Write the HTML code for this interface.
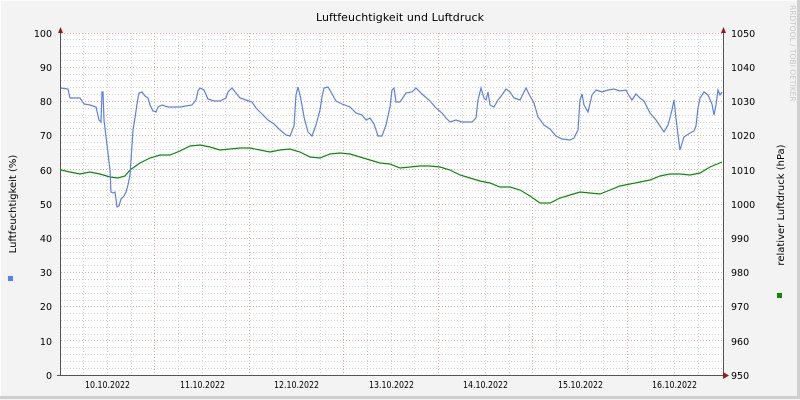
<!DOCTYPE html><html><head><meta charset="utf-8"><style>
html,body{margin:0;padding:0;background:#f3f3f3}
svg{display:block;font-family:"DejaVu Sans","Liberation Sans",sans-serif}
</style></head><body>
<svg width="800" height="400" viewBox="0 0 800 400" xmlns="http://www.w3.org/2000/svg">
<rect x="0" y="0" width="800" height="400" fill="#f3f3f3"/>
<path d="M0.5 399.5V0.5H799.5" stroke="#fcfcfc" fill="none"/>
<path d="M0 397.5H798.5V0" stroke="#cfcfcf" stroke-width="3" fill="none"/>
<rect x="61" y="33" width="662" height="342" fill="#fff"/>
<g shape-rendering="crispEdges">
<g stroke="#d4d4d4" stroke-dasharray="1,2" stroke-width="1">
<path d="M61 368.5H723M61 361.5H723M61 354.5H723M61 347.5H723M61 334.5H723M61 327.5H723M61 320.5H723M61 313.5H723M61 300.5H723M61 293.5H723M61 286.5H723M61 279.5H723M61 265.5H723M61 258.5H723M61 252.5H723M61 245.5H723M61 231.5H723M61 224.5H723M61 217.5H723M61 210.5H723M61 197.5H723M61 190.5H723M61 183.5H723M61 176.5H723M61 163.5H723M61 156.5H723M61 149.5H723M61 142.5H723M61 128.5H723M61 122.5H723M61 115.5H723M61 108.5H723M61 94.5H723M61 87.5H723M61 80.5H723M61 74.5H723M61 60.5H723M61 53.5H723M61 46.5H723M61 39.5H723"/>
<path d="M83.5 33V375M107.5 33V375M131.5 33V375M178.5 33V375M202.5 33V375M225.5 33V375M272.5 33V375M296.5 33V375M320.5 33V375M367.5 33V375M391.5 33V375M414.5 33V375M462.5 33V375M485.5 33V375M509.5 33V375M556.5 33V375M580.5 33V375M603.5 33V375M651.5 33V375M674.5 33V375M698.5 33V375"/>
</g>
<g stroke="#e6a7a7" stroke-dasharray="1,2" stroke-width="1">
<path d="M61 340.5H723M61 306.5H723M61 272.5H723M61 238.5H723M61 204.5H723M61 169.5H723M61 135.5H723M61 101.5H723M61 67.5H723M61 33.5H723"/>
<path d="M154.5 33V375M249.5 33V375M343.5 33V375M438.5 33V375M532.5 33V375M627.5 33V375"/>
</g>
</g>
<polyline fill="none" stroke="#0a8a0a" stroke-width="1.2" points="61,170 70,172 80,174 90,172 100,174 110,177 118,178 125,176 130,170 140,163 150,158 160,155 170,155 180,151 190,146 200,145 210,147 220,150 230,149 240,148 250,148 260,150 270,152 280,150 290,149 300,152 310,157 320,158 330,154 340,153 350,154 360,157 370,160 380,163 390,164 400,168 410,167 420,166 430,166 440,167 450,170 460,175 470,178 480,181 490,183 500,187 510,187 520,190 530,196 540,203 550,203 560,198 570,195 580,192 590,193 600,194 610,190 620,186 630,184 640,182 650,180 660,176 670,174 680,174 690,175 700,173 710,167 722,162"/>
<polyline fill="none" stroke="#5a7ff0" stroke-width="1.2" points="61,88 68,89 70,98 80,98 84,104 90,105 96,107 99,120 101,122 102,92 103,92 104,120 107,145 110,170 111,192 113,193 115,192 117,207 119,206 121,199 124,196 126,192 128,185 130,175 132,145 133,130 135,118 137,104 139,93 142,92 145,96 148,98 150,105 153,111 156,112 158,107 162,105 168,107 174,107 180,107 186,106 192,105 196,100 198,91 200,88 204,90 208,99 214,101 220,101 226,98 228,92 232,88 236,93 240,98 246,100 252,102 256,108 262,114 268,120 274,124 280,130 286,135 290,136 292,131 294,126 296,95 298,87 300,95 302,105 304,117 308,132 312,136 316,125 320,110 322,97 324,88 328,87 332,94 336,101 342,104 350,107 356,113 362,115 366,120 370,118 374,124 378,136 382,136 386,125 390,107 392,90 394,88 396,102 400,102 406,93 412,92 416,88 422,94 430,101 436,108 442,113 446,118 450,122 456,120 462,122 468,122 472,122 476,118 478,100 481,88 484,98 486,100 488,92 490,105 494,107 498,100 502,95 506,89 510,92 514,98 520,100 524,92 526,88 530,96 534,103 538,117 544,125 550,129 556,136 562,139 570,140 574,138 578,130 580,100 582,94 584,105 588,112 592,95 596,90 602,92 608,90 614,89 620,91 626,90 628,94 632,100 636,94 640,98 644,101 650,113 656,120 660,126 664,132 668,125 672,110 674,100 676,118 678,135 680,150 684,137 690,133 694,131 696,126 698,108 700,98 704,92 708,95 712,104 714,115 716,105 718,90 720,95 722,92"/>
<path d="M60.5 30V376M723.5 30V376M57 375.5H726" stroke="#555" stroke-width="1" fill="none" shape-rendering="crispEdges"/>
<polygon points="58,33 63,33 60.5,27" fill="#9a1a1a"/>
<polygon points="721,33 726,33 723.5,27" fill="#9a1a1a"/>
<polygon points="723,372 723,379 729,375.5" fill="#9a1a1a"/>
<g font-size="9.5" fill="#000" text-anchor="end">
<text x="52" y="379">0</text><text x="52" y="345">10</text><text x="52" y="310">20</text><text x="52" y="276">30</text><text x="52" y="242">40</text><text x="52" y="208">50</text><text x="52" y="174">60</text><text x="52" y="139">70</text><text x="52" y="105">80</text><text x="52" y="71">90</text><text x="52" y="37">100</text>
</g>
<g font-size="9.5" fill="#000">
<text x="731" y="379">950</text><text x="731" y="345">960</text><text x="731" y="310">970</text><text x="731" y="276">980</text><text x="731" y="242">990</text><text x="731" y="208">1000</text><text x="731" y="174">1010</text><text x="731" y="139">1020</text><text x="731" y="105">1030</text><text x="731" y="71">1040</text><text x="731" y="37">1050</text>
</g>
<g font-size="10" fill="#000">
<text x="85" y="388" textLength="45" lengthAdjust="spacingAndGlyphs">10.10.2022</text><text x="180" y="388" textLength="45" lengthAdjust="spacingAndGlyphs">11.10.2022</text><text x="274" y="388" textLength="45" lengthAdjust="spacingAndGlyphs">12.10.2022</text><text x="369" y="388" textLength="45" lengthAdjust="spacingAndGlyphs">13.10.2022</text><text x="463" y="388" textLength="45" lengthAdjust="spacingAndGlyphs">14.10.2022</text><text x="558" y="388" textLength="45" lengthAdjust="spacingAndGlyphs">15.10.2022</text><text x="652" y="388" textLength="45" lengthAdjust="spacingAndGlyphs">16.10.2022</text>
</g>
<text x="316" y="21" font-size="11" textLength="168" fill="#000">Luftfeuchtigkeit und Luftdruck</text>
<text transform="translate(16,204) rotate(-90)" font-size="10" text-anchor="middle" fill="#000">Luftfeuchtigkeit (%)</text>
<text transform="translate(784,205) rotate(-90)" font-size="10" text-anchor="middle" fill="#000">relativer Luftdruck (hPa)</text>
<text transform="translate(790,5) rotate(90)" font-size="7.5" fill="#c8c8c8">RRDTOOL / TOBI OETIKER</text>
<rect x="8" y="276" width="5" height="5" fill="#5a7ff0"/>
<rect x="777" y="293" width="5" height="5" fill="#0a8a0a"/>
</svg>
</body></html>
